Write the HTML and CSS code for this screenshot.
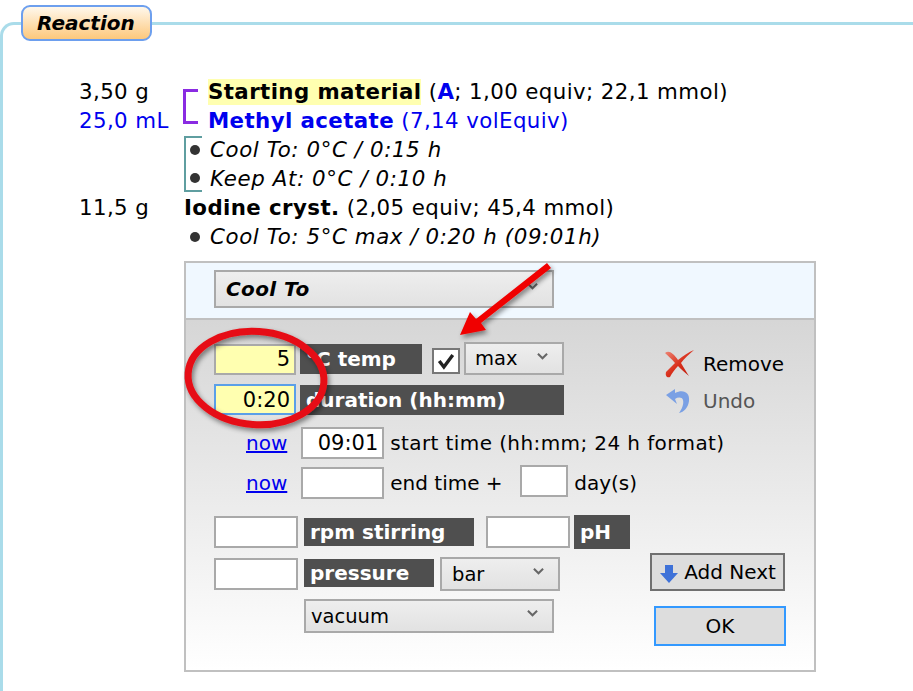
FILE: index.html
```html
<!DOCTYPE html>
<html>

<head>
    <meta charset="utf-8">
    <title>Reaction</title>
    <link rel="stylesheet" href="styles.css">
</head>

<body>
    <fieldset class="section">
        <legend class="section-title">Reaction</legend>

        <!-- Reagents and steps -->
        <div class="lines">
            <div class="amount">3,50 g</div>
            <div class="bracket-reagents"></div>
            <div class="line"><span class="reagent highlight">Starting material</span> <span>(<b class="blue">A</b>; 1,00 equiv; 22,1 mmol)</span></div>

            <div class="amount blue">25,0 mL</div>
            <div class="line blue"><b class="reagent">Methyl acetate</b> <span>(7,14 volEquiv)</span></div>

            <div class="bracket-steps"><i class="bullet"></i><i class="bullet"></i></div>
            <div class="line step">Cool To: 0°C / 0:15 h</div>
            <div class="line step">Keep At: 0°C / 0:10 h</div>

            <div class="amount">11,5 g</div>
            <div class="line wide"><b class="reagent">Iodine cryst.</b> <span>(2,05 equiv; 45,4 mmol)</span></div>

            <div class="bullet-cell"><i class="bullet"></i></div>
            <div class="line step">Cool To: 5°C max / 0:20 h (09:01h)</div>
        </div>

        <!-- Step editor -->
        <div class="panel">
            <div class="panel-head">
                <div class="select select-step">
                    <span>Cool To</span>
                    <svg class="chevron" viewBox="0 0 12 8"><path d="M1 1.500 L6 6.500 L11 1.500" /></svg>
                </div>
            </div>
            <div class="panel-body">
                <div class="fields">
                    <div class="row row-temp">
                        <input class="input input-short yellow" value="5">
                        <div class="tag tag-temp">°C temp</div>
                        <div class="check">
                            <svg viewBox="0 0 28 26"><path d="M6 13 L11.500 20 L22 6" /></svg>
                        </div>
                        <div class="select select-max">
                            <span>max</span>
                            <svg class="chevron" viewBox="0 0 12 8"><path d="M1 1.500 L6 6.500 L11 1.500" /></svg>
                        </div>
                    </div>
                    <div class="row row-duration">
                        <input class="input input-short yellow focused" value="0:20">
                        <div class="tag tag-duration">duration (hh:mm)</div>
                    </div>
                    <div class="row row-time">
                        <a class="now" href="#">now</a>
                        <input class="input input-time" value="09:01">
                        <span class="time-label">start time (hh:mm; 24 h format)</span>
                    </div>
                    <div class="row row-time row-end">
                        <a class="now" href="#">now</a>
                        <input class="input input-time">
                        <span class="time-label time-end">end time +</span>
                        <input class="input input-day">
                        <span>day(s)</span>
                    </div>
                    <div class="row row-rpm">
                        <input class="input input-wide">
                        <div class="tag tag-rpm">rpm stirring</div>
                        <input class="input input-wide input-ph">
                        <div class="tag tag-ph">pH</div>
                    </div>
                    <div class="row row-pressure">
                        <input class="input input-wide">
                        <div class="tag tag-pressure">pressure</div>
                        <div class="select select-bar">
                            <span>bar</span>
                            <svg class="chevron" viewBox="0 0 12 8"><path d="M1 1.500 L6 6.500 L11 1.500" /></svg>
                        </div>
                    </div>
                    <div class="row row-vacuum">
                        <div class="select select-vacuum">
                            <span>vacuum</span>
                            <svg class="chevron" viewBox="0 0 12 8"><path d="M1 1.500 L6 6.500 L11 1.500" /></svg>
                        </div>
                    </div>
                </div>

                <div class="actions">
                    <div class="action">
                        <svg class="action-icon" viewBox="0 0 32 30">
                            <defs>
                                <linearGradient id="redX" x1="0" y1="0" x2="1" y2="1">
                                    <stop offset="0" stop-color="#ee8a7a" />
                                    <stop offset="0.5" stop-color="#d9301c" />
                                    <stop offset="1" stop-color="#b81a0c" />
                                </linearGradient>
                            </defs>
                            <path fill="url(#redX)" d="M1 4 C5 1 9 4 14 11 C19 7 25 3 30 1 C25 5 20 10 17 14 C20 19 23 24 25 27 C21 24 17 20 14 17 C11 20 8 24 6 28 C3 29 1 27 2 23 C5 20 8 17 11 14 C8 10 4 7 1 4 Z" />
                        </svg>
                        <span>Remove</span>
                    </div>
                    <div class="action action-off">
                        <svg class="action-icon" viewBox="0 0 32 30">
                            <path fill="#7aa0e4" d="M2 9 L11 3 L11 7 C19 3 26 6 25 15 C24 22 20 26 15 27 C18 23 20 18 19 14 C18 11 14 11 11 13 L13 18 Z" />
                        </svg>
                        <span>Undo</span>
                    </div>
                    <div class="buttons">
                        <div class="btn btn-next">
                            <svg class="next-icon" viewBox="0 0 20 20"><path fill="#3f72d8" d="M6 1 L14 1 L14 9 L19 9 L10 19 L1 9 L6 9 Z" /></svg>
                            Add Next
                        </div>
                        <div class="btn btn-ok">OK</div>
                    </div>
                </div>
            </div>
        </div>
    </fieldset>

    <!-- Red annotations drawn on top of the screenshot -->
    <svg class="markup" viewBox="0 0 913 691">
        <defs>
            <filter id="soft" x="-20%" y="-20%" width="140%" height="140%">
                <feDropShadow dx="2" dy="3" stdDeviation="2.500" flood-color="#000" flood-opacity="0.45" />
            </filter>
        </defs>
        <g filter="url(#soft)">
            <ellipse cx="256" cy="378" rx="68" ry="46.500" fill="none" stroke="#e60d14" stroke-width="7" transform="rotate(4 256 378)" />
            <path fill="#f00000" d="M460 335 L470 312 L476 319 L547 263 L551 268 L481 323 L486 330 Z" />
        </g>
    </svg>
</body>

</html>
```

FILE: styles.css
```css
html,
body {
    height: 100%;
}

body {
    margin: 0;
    overflow: hidden;
    position: relative;
    background: #fff;
    color: #000;
    font-family: 'DejaVu Sans', Verdana, sans-serif;
    font-size: 20px;
}

.section {
    box-sizing: border-box;
    width: 100%;
    height: calc(100% - 5px);
    margin: 5px 0 0 0;
    padding: 0;
    border: none;
    border-top: 3px solid #aadcea;
    border-left: 3px solid #aadcea;
    border-top-left-radius: 14px;
}

.section-title {
    box-sizing: border-box;
    width: 131px;
    height: 36px;
    margin-left: 18px;
    padding: 0 0 0 14px;
    line-height: 32px;
    font-weight: bold;
    font-style: italic;
    border: 2px solid #6d9fee;
    border-radius: 9px;
    background: linear-gradient(#fff8ec, #fdc87c);
}

.lines {
    display: grid;
    grid-template-columns: 105px 24px auto;
    grid-auto-rows: 29px;
    justify-content: start;
    align-items: center;
    margin: 36px 0 0 76px;
    font-size: 21.33px;
    letter-spacing: 0.4px;
}

.amount {
    grid-column: 1;
}

.blue {
    color: #0000ee;
}

.line {
    grid-column: 3;
    white-space: nowrap;
}

.line.wide {
    grid-column: 2 / span 2;
}

.step {
    font-style: italic;
    margin-left: 2px;
    letter-spacing: 0.6px;
}

.reagent {
    font-weight: bold;
}

.highlight {
    background: #ffffb0;
    display: inline-block;
    line-height: 26px;
}

.bracket-reagents {
    grid-column: 2;
    grid-row: span 2;
    box-sizing: border-box;
    width: 15px;
    height: 35px;
    margin-left: -1px;
    border: 3px solid #8a2be2;
    border-right: none;
}

.bracket-steps {
    grid-column: 2;
    grid-row: span 2;
    box-sizing: border-box;
    display: flex;
    flex-direction: column;
    justify-content: center;
    gap: 18px;
    width: 18px;
    height: 56px;
    border: 2px solid #5f9ea0;
    border-right: none;
}

.bullet {
    display: block;
    width: 10px;
    height: 10px;
    margin-left: 4px;
    border-radius: 50%;
    background: #333;
}

.bullet-cell {
    grid-column: 2;
}

.bullet-cell .bullet {
    margin-left: 6px;
}

/* Step editor */
.panel {
    box-sizing: border-box;
    width: 632px;
    height: 411px;
    margin: 10px 0 0 181px;
    border: 2px solid #c0c0c0;
}

.panel-head {
    box-sizing: border-box;
    height: 57px;
    padding: 7px 0 0 28px;
    background: #f0f8ff;
    border-bottom: 2px solid #c0c0c0;
}

.panel-body {
    display: flex;
    height: 350px;
    background: linear-gradient(#d6d6d6, #fff);
}

.fields {
    width: 450px;
    padding: 23px 0 0 28px;
}

.row {
    display: flex;
    align-items: center;
    white-space: nowrap;
}

.row-duration {
    margin-top: 9px;
}

.row-time {
    margin-top: 12px;
    margin-left: 32px;
}

.row-end {
    margin-top: 8px;
}

.row-rpm {
    margin-top: 16px;
}

.row-pressure {
    margin-top: 8px;
}

.row-vacuum {
    margin-top: 8px;
    margin-left: 90px;
}

.input {
    box-sizing: border-box;
    height: 32px;
    padding: 0 4px;
    border: 2px solid #a9a9a9;
    background: #fff;
    color: #000;
    font: inherit;
    font-size: 21px;
    text-align: right;
    outline: none;
}

.input-short {
    width: 82px;
    height: 31px;
}

.input-time {
    width: 83px;
    margin-left: 14px;
}

.time-label {
    margin-left: 6px;
    letter-spacing: 0.4px;
}

.time-end {
    width: 130px;
    letter-spacing: 0;
}

.input-day {
    width: 48px;
    margin: -4px 6px 0 0;
}

.input-wide {
    width: 84px;
}

.input-ph {
    margin-left: 12px;
}

.yellow {
    background: #ffffb0;
}

.focused {
    border-color: #5a9fe8;
}

.tag {
    box-sizing: border-box;
    display: flex;
    align-items: center;
    height: 30px;
    margin-left: 4px;
    padding-left: 6px;
    background: #4f4f4f;
    color: #fff;
    font-weight: bold;
}

.tag-temp {
    width: 122px;
}

.tag-duration {
    width: 264px;
}

.tag-rpm {
    width: 170px;
    height: 28px;
    margin-left: 6px;
}

.tag-ph {
    width: 56px;
    height: 34px;
}

.tag-pressure {
    width: 130px;
    height: 28px;
    margin: 0 0 3px 6px;
}

.check {
    box-sizing: border-box;
    width: 28px;
    height: 26px;
    margin: 4px 4px 0 10px;
    border: 2px solid #777;
    background: #fff;
}

.check svg {
    display: block;
    width: 24px;
    height: 22px;
    fill: none;
    stroke: #222;
    stroke-width: 4;
}

.select {
    box-sizing: border-box;
    display: flex;
    align-items: center;
    justify-content: space-between;
    height: 34px;
    padding: 0 14px 0 9px;
    border: 2px solid #a9a9a9;
    background: linear-gradient(#eee, #e2e2e2);
}

.select-step {
    width: 340px;
    height: 38px;
    padding: 0 14px 0 10px;
    font-weight: bold;
    font-style: italic;
    letter-spacing: 0.4px;
}

.select-max {
    width: 100px;
    height: 33px;
    margin-top: -1px;
}

.select-bar {
    width: 120px;
    margin-left: 6px;
    padding-left: 10px;
}

.select-vacuum {
    width: 250px;
    padding-left: 5px;
}

.select-max span,
.select-bar span,
.select-vacuum span {
    font-size: 19.5px;
}

.chevron {
    width: 11px;
    height: 8px;
    margin-bottom: 6px;
    fill: none;
    stroke: #666;
    stroke-width: 2.200;
}

.actions {
    flex: 1;
    display: flex;
    flex-direction: column;
}

.action {
    display: flex;
    align-items: center;
    gap: 7px;
    height: 36px;
}

.action:first-child {
    margin-top: 26px;
}

.action-off {
    margin-top: 1px;
    color: #555;
}

.action-icon {
    width: 32px;
    height: 30px;
}

.buttons {
    display: flex;
    flex-direction: column;
    align-items: flex-start;
    margin-left: -14px;
    padding-top: 134px;
}

.btn {
    box-sizing: border-box;
    display: flex;
    align-items: center;
    justify-content: center;
    background: #ddd;
}

.btn-next {
    width: 135px;
    height: 38px;
    border: 2px solid #707070;
    gap: 5px;
}

.next-icon {
    width: 20px;
    height: 20px;
    margin-top: 4px;
}

.btn-ok {
    width: 132px;
    height: 40px;
    margin: 15px 0 0 4px;
    border: 2px solid #3399ff;
}

.markup {
    position: absolute;
    left: 0;
    top: 0;
    width: 913px;
    height: 691px;
    pointer-events: none;
}
```
